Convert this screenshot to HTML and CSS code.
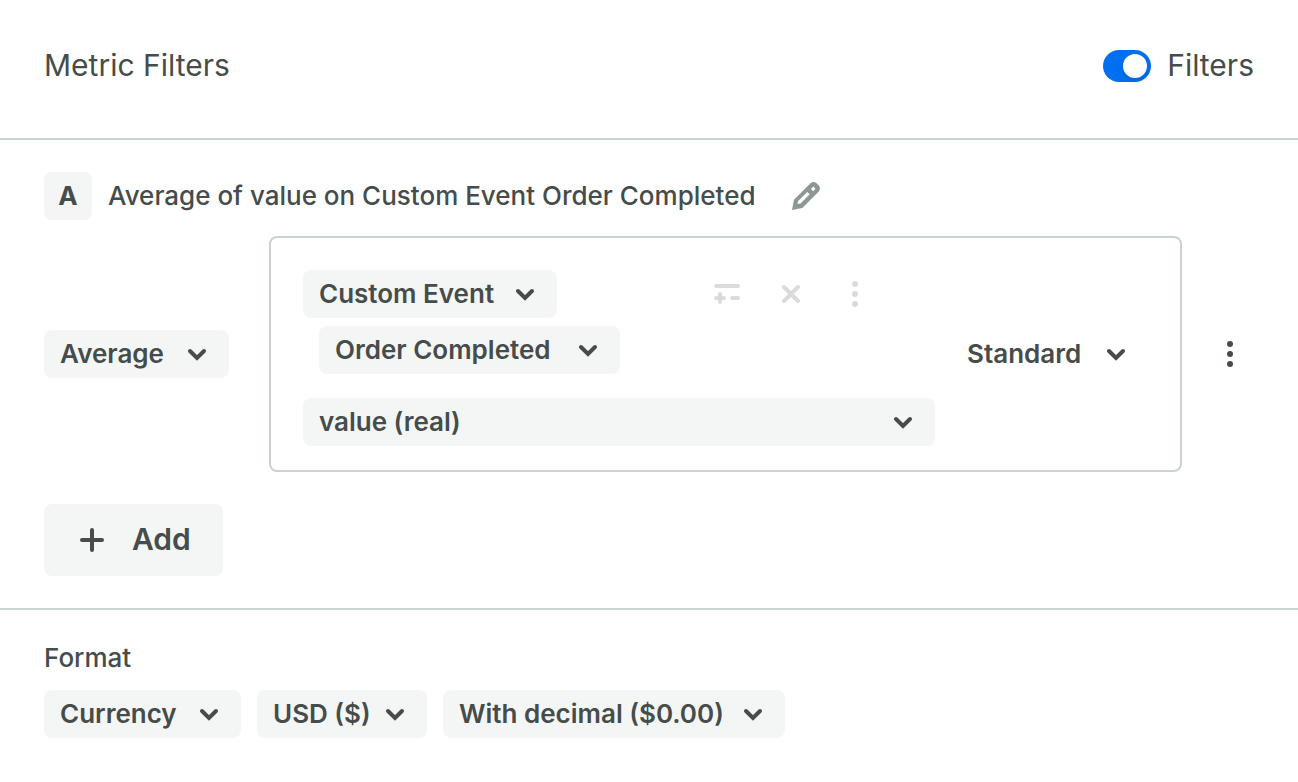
FILE: index.html
```html
<!DOCTYPE html>
<html lang="en">
<head>
<meta charset="utf-8">
<meta name="viewport" content="width=device-width, initial-scale=1">
<title>Metric Filters</title>
<link rel="stylesheet" href="styles.css">
</head>
<body>

<header class="header">
  <h1>Metric Filters</h1>
  <label class="toggle">
    <input type="checkbox" checked>
    <span>Filters</span>
  </label>
</header>

<main>
  <section class="metrics">
    <div class="metric-title">
      <span class="badge">A</span>
      <h2>Average of value on Custom Event Order Completed</h2>
      <button class="icon-btn edit" type="button" aria-label="Rename metric">
        <svg width="48" height="48" viewBox="0 0 48 48"><path fill="currentColor" fill-rule="evenodd" d="M10 38L12 27.800L28.500 11.300Q31.500 8.800 34.500 11.300L36.800 13.600Q39.200 16.500 36.800 19.400L20.300 36zM15.500 32L18.500 31.500L27.700 22.300L25.300 19.900L16.100 29.100zM31.400 14.600L28.900 17.100L31.100 19.300L33.600 16.800z"/></svg>
      </button>
    </div>

    <div class="metric-row">
      <div class="select aggregation">
        <select aria-label="Aggregation"><option>Average</option></select>
        <svg width="20" height="16" viewBox="0 0 20 16"><path d="M3 5l7 7 7-7"/></svg>
      </div>

      <div class="query">
        <div class="query-fields">
          <div class="event-row">
            <div class="select event-type">
              <select aria-label="Event type"><option>Custom Event</option></select>
              <svg width="20" height="16" viewBox="0 0 20 16"><path d="M3 5l7 7 7-7"/></svg>
            </div>
            <div class="event-actions">
              <button class="icon-btn" type="button" aria-label="Add filter">
                <svg width="48" height="48" viewBox="0 0 48 48"><path class="line" d="M13 16h22M13 28h8M17 24v8M29 28h6"/></svg>
              </button>
              <button class="icon-btn" type="button" aria-label="Remove event">
                <svg width="48" height="48" viewBox="0 0 48 48"><path class="line" d="M17 17l14 14M31 17L17 31"/></svg>
              </button>
              <button class="icon-btn" type="button" aria-label="Event options">
                <svg width="48" height="48" viewBox="0 0 48 48" fill="currentColor"><circle cx="24" cy="14" r="3"/><circle cx="24" cy="24" r="3"/><circle cx="24" cy="34" r="3"/></svg>
              </button>
            </div>
          </div>
          <div class="select event-name">
            <select aria-label="Event name"><option>Order Completed</option></select>
            <svg width="20" height="16" viewBox="0 0 20 16"><path d="M3 5l7 7 7-7"/></svg>
          </div>
          <div class="select property">
            <select aria-label="Property"><option>value (real)</option></select>
            <svg width="20" height="16" viewBox="0 0 20 16"><path d="M3 5l7 7 7-7"/></svg>
          </div>
        </div>
        <div class="select attribution">
          <select aria-label="Attribution"><option>Standard</option></select>
          <svg width="20" height="16" viewBox="0 0 20 16"><path d="M3 5l7 7 7-7"/></svg>
        </div>
      </div>

      <button class="icon-btn more" type="button" aria-label="Metric options">
        <svg width="48" height="48" viewBox="0 0 48 48" fill="currentColor"><circle cx="24" cy="14" r="3"/><circle cx="24" cy="24" r="3"/><circle cx="24" cy="34" r="3"/></svg>
      </button>
    </div>

    <button class="add-btn" type="button">
      <svg width="32" height="32" viewBox="0 0 32 32"><path class="line" d="M6 16h20M16 6v20"/></svg>
      <span>Add</span>
    </button>
  </section>

  <section class="format">
    <h2>Format</h2>
    <div class="format-row">
      <div class="select number-type">
        <select aria-label="Number type"><option>Currency</option></select>
        <svg width="20" height="16" viewBox="0 0 20 16"><path d="M3 5l7 7 7-7"/></svg>
      </div>
      <div class="select currency">
        <select aria-label="Currency"><option>USD ($)</option></select>
        <svg width="20" height="16" viewBox="0 0 20 16"><path d="M3 5l7 7 7-7"/></svg>
      </div>
      <div class="select decimals">
        <select aria-label="Decimals"><option>With decimal ($0.00)</option></select>
        <svg width="20" height="16" viewBox="0 0 20 16"><path d="M3 5l7 7 7-7"/></svg>
      </div>
    </div>
  </section>
</main>

</body>
</html>
```
FILE: styles.css
```css
* {
  box-sizing: border-box;
}

body {
  margin: 0;
  background: #fff;
  color: #464c4b;
  font-family: Inter, "Liberation Sans", Arial, sans-serif;
  font-size: 26px;
}

h1, h2 {
  margin: 0;
  font-size: 26px;
  font-weight: 500;
  line-height: 48px;
}

button, select {
  border: 0;
  margin: 0;
  color: inherit;
  font-family: inherit;
  font-weight: 600;
  cursor: pointer;
}

.header {
  display: flex;
  justify-content: space-between;
  align-items: center;
  padding: 44px 44px 50px;
  border-bottom: 2px solid #cbd3d1;
  line-height: 44px;
}
.header h1, .toggle span {
  padding-bottom: 2px;
  font-size: 30px;
  font-weight: 400;
  line-height: 42px;
}

.toggle {
  display: flex;
  align-items: center;
  gap: 16px;
  cursor: pointer;
}
.toggle input {
  appearance: none;
  display: flex;
  justify-content: flex-end;
  width: 48px;
  height: 32px;
  margin: 0;
  padding: 4px;
  border-radius: 16px;
  background: #0070f0;
}
.toggle input::before {
  content: "";
  width: 24px;
  height: 24px;
  border-radius: 50%;
  background: #fff;
  box-shadow: 0 4px 8px rgba(0, 0, 0, 0.1);
}
.toggle input:not(:checked) {
  justify-content: flex-start;
  background: #cbd3d1;
}

.metrics {
  padding: 32px 44px;
  border-bottom: 2px solid #cbd3d1;
}

.metric-title {
  display: flex;
  align-items: center;
  gap: 16px;
  margin-bottom: 16px;
}
.badge {
  width: 48px;
  border-radius: 8px;
  background: #f4f6f5;
  font-weight: 700;
  line-height: 48px;
  text-align: center;
}

.icon-btn {
  display: flex;
  padding: 0;
  background: none;
  color: #dadcdb;
}
.icon-btn.edit {color: #8c9796; margin-left: 10px;}
.icon-btn.more {color: #464c4b; margin-left: 24px;}

.line {
  fill: none;
  stroke: currentColor;
  stroke-width: 4;
  stroke-linecap: round;
}

/* the chevron shares the grid cell with the select */
.select {
  display: grid;
  align-items: center;
  flex-shrink: 0;
}
.select select {
  grid-area: 1 / 1;
  appearance: none;
  width: 100%;
  height: 48px;
  padding: 0 44px 2px 16px;
  border-radius: 8px;
  background: #f4f6f5;
  font-size: 26px;
}
.select svg {
  grid-area: 1 / 1;
  justify-self: end;
  margin-right: 22px;
  fill: none;
  stroke: currentColor;
  stroke-width: 4;
  stroke-linecap: round;
  pointer-events: none;
}

.aggregation {width: 185px;}
.event-type {width: 254px;}
.event-name {width: 301px; margin: 8px 0 24px 16px;}
.property {width: 100%;}
.attribution {width: 197px;}
.attribution select {background: none;}
.number-type {width: 197px;}
.currency {width: 170px;}
.decimals {width: 342px;}

.metric-row {
  display: flex;
  align-items: center;
}

.query {
  display: flex;
  align-items: center;
  flex: 1;
  gap: 16px;
  margin-left: 40px;
  padding: 0 32px;
  border: 2px solid #cbd3d1;
  border-radius: 8px;
}
.query-fields {
  display: flex;
  flex-direction: column;
  align-items: flex-start;
  flex: 1;
  padding: 32px 0 24px;
}
.event-row {
  display: flex;
  justify-content: space-between;
  width: 100%;
  padding-right: 56px;
}
.event-actions {
  display: flex;
  gap: 16px;
}

.add-btn {
  display: flex;
  align-items: center;
  gap: 24px;
  height: 72px;
  margin-top: 32px;
  padding: 0 32px;
  border-radius: 8px;
  background: #f4f6f5;
  font-size: 30px;
}
.add-btn span {
  padding-bottom: 2px;
}

.format {
  padding: 24px 44px 44px;
}
.format-row {
  display: flex;
  gap: 16px;
  margin-top: 8px;
}
```
